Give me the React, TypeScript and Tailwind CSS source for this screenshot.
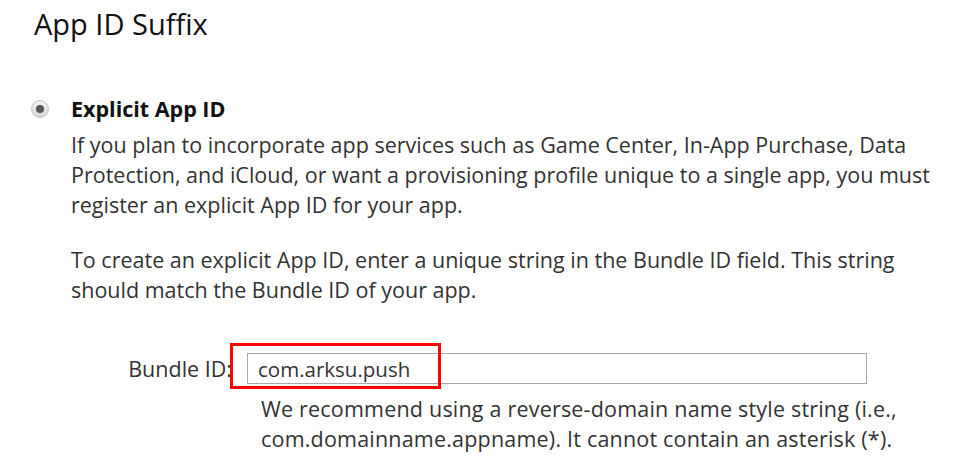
import React from "react";

export default function App() {
  const font = { fontFamily: '"Open Sans", "Noto Sans", sans-serif' };
  return (
    <div className="w-[963px] h-[471px] bg-white text-[#333] overflow-hidden" style={font}>
      <div className="pl-[34px] pt-[4px]">
        <h2 className="text-[29px] leading-[40px] text-[#111] font-normal">App ID Suffix</h2>
      </div>
      <div className="flex mt-[50px] pl-[31px]">
        <div className="w-[40px] pt-[6px]">
          <div className="w-[18px] h-[18px] rounded-full border border-[#c4c4c4] bg-gradient-to-b from-[#f2f2f2] to-[#d6d6d6] flex items-center justify-center">
            <div className="w-[8px] h-[8px] rounded-full bg-[#585858]"></div>
          </div>
        </div>
        <div className="flex-1">
          <div className="text-[21.5px] leading-[30px] font-bold text-[#111]">Explicit App ID</div>
          <p className="text-[21.5px] leading-[30px] mt-[6px] whitespace-nowrap">
            If you plan to incorporate app services such as Game Center, In-App Purchase, Data<br />
            Protection, and iCloud, or want a provisioning profile unique to a single app, you must<br />
            register an explicit App ID for your app.
          </p>
          <p className="text-[21.5px] leading-[30px] mt-[25px] whitespace-nowrap">
            To create an explicit App ID, enter a unique string in the Bundle ID field. This string<br />
            should match the Bundle ID of your app.
          </p>
          <div className="flex items-center mt-[48px] gap-[15px]">
            <div className="w-[161px] text-right text-[21.5px] leading-[30px] whitespace-nowrap">Bundle ID:</div>
            <div className="relative">
              <input
                readOnly
                value="com.arksu.push"
                className="block w-[620px] h-[31px] border border-[#aaa] px-[10px] text-[20.5px] leading-[29px] text-[#333] outline-none bg-white"
                style={font}
              />
              <div className="absolute left-[-17px] top-[-10px] w-[211px] h-[46px] border-[3px] border-[#ff0000] pointer-events-none"></div>
            </div>
          </div>
          <p className="text-[21.5px] leading-[30px] mt-[10px] pl-[190px] whitespace-nowrap tracking-[0.2px]">
            We recommend using a reverse-domain name style string (i.e.,<br />
            com.domainname.appname). It cannot contain an asterisk (*).
          </p>
        </div>
      </div>
    </div>
  );
}
